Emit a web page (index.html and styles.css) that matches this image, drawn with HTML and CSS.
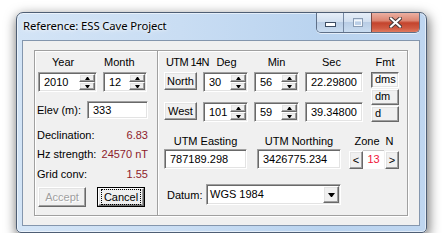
FILE: index.html
```html
<!DOCTYPE html>
<html>
<head>
<meta charset="utf-8">
<link rel="stylesheet" href="styles.css">
</head>
<body>
<div class="window">
  <div class="titlebar">
    <span class="title">Reference: ESS Cave Project</span>
    <div class="caps">
      <span class="cap cap-min"><svg width="11" height="5" viewBox="0 0 11 5"><rect x="0.5" y="0.5" width="10" height="4" fill="#fff" stroke="#3d4d63"/></svg></span>
      <span class="cap cap-max"><svg width="10" height="9" viewBox="0 0 10 9"><rect x="0.5" y="0.5" width="9" height="8" fill="none" stroke="#8a9cb3"/><rect x="1.5" y="2.5" width="7" height="5" fill="none" stroke="#f4f8fc"/></svg></span>
      <span class="cap cap-close"><svg width="13" height="11" viewBox="0 0 13 11"><path d="M2 1.5 L11 9.5 M11 1.5 L2 9.5" stroke="#4a3a3a" stroke-width="4" stroke-linecap="square"/><path d="M2 1.5 L11 9.5 M11 1.5 L2 9.5" stroke="#fff" stroke-width="2" stroke-linecap="square"/></svg></span>
    </div>
  </div>
  <div class="client">
    <div class="group">
      <div class="left">
        <div class="ym-head"><span class="lbl-year">Year</span><span class="lbl-month">Month</span></div>
        <div class="ym-row">
          <div class="spin sunken w-year"><span class="val">2010</span><span class="spin-btns"><span class="sb raised"><i class="up"></i></span><span class="sb raised"><i class="dn"></i></span></span></div>
          <div class="spin sunken w-month"><span class="val">12</span><span class="spin-btns"><span class="sb raised"><i class="up"></i></span><span class="sb raised"><i class="dn"></i></span></span></div>
        </div>
        <div class="elev-row"><span>Elev (m):</span><span class="edit sunken elev">333</span></div>
        <div class="info-row decl"><span>Declination:</span><span class="value">6.83</span></div>
        <div class="info-row hz"><span>Hz strength:</span><span class="value">24570 nT</span></div>
        <div class="info-row grid"><span>Grid conv:</span><span class="value">1.55</span></div>
        <div class="btn-row">
          <span class="btn raised accept">Accept</span>
          <span class="btn-default"><span class="btn raised cancel"><span class="focus">Cancel</span></span></span>
        </div>
      </div>
      <div class="right">
        <div class="top-area">
          <div class="coords">
            <div class="c-head"><span class="h-utm">UTM 14N</span><span class="h-deg">Deg</span><span class="h-min">Min</span><span class="h-sec">Sec</span></div>
            <div class="c-row r1">
              <span class="btn raised hemi">North</span>
              <div class="spin sunken w-deg"><span class="val">30</span><span class="spin-btns"><span class="sb raised"><i class="up"></i></span><span class="sb raised"><i class="dn"></i></span></span></div>
              <div class="spin sunken w-min"><span class="val">56</span><span class="spin-btns"><span class="sb raised"><i class="up"></i></span><span class="sb raised"><i class="dn"></i></span></span></div>
              <span class="edit sunken w-sec">22.29800</span>
            </div>
            <div class="c-row r2">
              <span class="btn raised hemi">West</span>
              <div class="spin sunken w-deg"><span class="val">101</span><span class="spin-btns"><span class="sb raised"><i class="up"></i></span><span class="sb raised"><i class="dn"></i></span></span></div>
              <div class="spin sunken w-min"><span class="val">59</span><span class="spin-btns"><span class="sb raised"><i class="up"></i></span><span class="sb raised"><i class="dn"></i></span></span></div>
              <span class="edit sunken w-sec">39.34800</span>
            </div>
          </div>
          <div class="fmt">
            <span class="fmt-head">Fmt</span>
            <span class="fbtn pressed">dms</span>
            <span class="fbtn raised">dm</span>
            <span class="fbtn raised">d</span>
          </div>
        </div>
        <div class="utm-head">
          <span class="h-east">UTM Easting</span>
          <span class="h-north">UTM Northing</span>
          <span class="h-zone">Zone<span class="zone-n">N</span></span>
        </div>
        <div class="utm-row">
          <span class="edit sunken w-east">787189.298</span>
          <span class="edit sunken w-north">3426775.234</span>
          <div class="zone">
            <span class="btn raised zbtn">&lt;</span>
            <span class="zone-val">13</span>
            <span class="btn raised zbtn zright">&gt;</span>
          </div>
        </div>
        <div class="datum-row">
          <span class="datum-lbl">Datum:</span>
          <div class="combo sunken"><span class="combo-val">WGS 1984</span><span class="drop raised"><i class="dd"></i></span></div>
        </div>
      </div>
    </div>
  </div>
</div>
</body>
</html>
```

FILE: styles.css
```css
* { box-sizing: border-box; }

body {
  margin: 0;
  background: #fff;
  font-family: "Liberation Sans", Arial, sans-serif;
  font-size: 11px;
  color: #000;
}

.window {
  margin: 12px 0 0 16px;
  width: 411px;
  height: 221px;
  border: 1px solid #4e5e74;
  border-radius: 7px 7px 5px 5px;
  background: linear-gradient(90deg, #d3e4f6 0%, #c9ddf3 40%, #b9d3ef 75%, #bfd6f0 100%);
  box-shadow: inset 0 0 0 1px rgba(255,255,255,0.55), 1px 4px 12px 1px rgba(0,0,0,0.55);
  display: flex;
  flex-direction: column;
}

.titlebar {
  height: 27px;
  flex: none;
  display: flex;
  padding-left: 6px;
}

.title {
  align-self: center;
  font-family: "Noto Sans", "Open Sans", sans-serif;
  font-size: 11.3px;
  letter-spacing: -0.1px;
  line-height: 16px;
  margin-top: -1px;
  color: #000;
  text-shadow: 0 0 6px rgba(255,255,255,0.9), 0 0 3px rgba(255,255,255,0.9);
}

.caps {
  margin-left: auto;
  margin-right: 6px;
  height: 20px;
  display: flex;
  border: 1px solid #5f7088;
  border-top: none;
  border-radius: 0 0 5px 5px;
  overflow: hidden;
  box-shadow: 0 1px 0 rgba(255,255,255,0.6);
}

.cap {
  display: flex;
  align-items: center;
  justify-content: center;
  height: 100%;
}

.cap-min {
  width: 27px;
  background: linear-gradient(#e6eef8 0%, #d2e0f0 45%, #b9cde5 50%, #c9dcf0 100%);
  border-right: 1px solid #7588a2;
  align-items: flex-end;
  padding-bottom: 5px;
}

.cap-max {
  width: 28px;
  background: linear-gradient(#e6eef8 0%, #d2e0f0 45%, #b9cde5 50%, #c9dcf0 100%);
  border-right: 1px solid #7a4a44;
}

.cap-close {
  width: 47px;
  background: linear-gradient(#ebb0a2 0%, #dc8672 40%, #c4442d 52%, #cf5a42 80%, #e07a5f 100%);
}

.client {
  margin: 0 6px 0 5px;
  height: 186px;
  flex: none;
  border: 1px solid #8496ad;
  background: #f0f0f0;
  padding: 9px 0 0 11px;
}

.group {
  width: 374px;
  height: 166px;
  border: 1px solid #a0a0a0;
  box-shadow: inset 1px 1px 0 #fff, 1px 1px 0 #fff;
  display: flex;
}

/* shared controls */
.sunken {
  border: 1px solid;
  border-color: #a0a0a0 #fff #fff #a0a0a0;
  padding: 1px;
  box-shadow: inset 1px 1px 0 #696969, inset -1px -1px 0 #e3e3e3;
  background: #fff;
}

.raised {
  border: 1px solid;
  border-color: #fff #696969 #696969 #fff;
  box-shadow: inset -1px -1px 0 #a0a0a0, inset 1px 1px 0 #e3e3e3;
  background: #f0f0f0;
}

.spin {
  display: flex;
  height: 20px;
}

.spin .val {
  flex: 1;
  padding-left: 4px;
  line-height: 16px;
}

.spin-btns {
  width: 16px;
  display: flex;
  flex-direction: column;
}

.sb {
  height: 8px;
  display: flex;
  align-items: center;
  justify-content: center;
}

.sb i {
  display: block;
  width: 1px;
  height: 0;
  border-left: 2px solid transparent;
  border-right: 2px solid transparent;
}

.sb i.up { border-bottom: 3px solid #000; box-sizing: content-box; }
.sb i.dn { border-top: 3px solid #000; box-sizing: content-box; }

.edit {
  height: 20px;
  padding-left: 5px;
  line-height: 16px;
  white-space: nowrap;
}

.btn {
  display: flex;
  align-items: center;
  justify-content: center;
  line-height: 13px;
}

/* left section */
.left {
  width: 122px;
  flex: none;
  padding: 5px 9px 0 2px;
  display: flex;
  flex-direction: column;
}

.ym-head {
  display: grid;
  grid-template-columns: 59px 44px;
  column-gap: 6px;
  margin-left: 1px;
  height: 13px;
  line-height: 13px;
}

.lbl-year { padding-left: 14px; }
.lbl-month { padding-left: 1px; }

.ym-row {
  display: flex;
  gap: 6px;
  margin: 3px 0 0 1px;
}

.w-year { width: 59px; }
.w-month { width: 44px; }

.elev-row {
  display: flex;
  align-items: center;
  justify-content: space-between;
  margin-top: 9px;
  height: 18px;
}

.elev {
  width: 61px;
  height: 18px;
  line-height: 14px;
}

.info-row {
  display: flex;
  justify-content: space-between;
  height: 13px;
  line-height: 13px;
}

.value { color: #8e1b2b; }

.decl { margin-top: 10px; }
.hz { margin-top: 6px; }
.grid { margin-top: 7px; }

.btn-row {
  display: flex;
  gap: 11px;
  margin: 6px 0 0 1px;
}

.accept {
  width: 48px;
  height: 20px;
  color: #a0a0a0;
  text-shadow: 1px 1px 0 #fff;
}

.btn-default {
  width: 48px;
  height: 20px;
  border: 1px solid #000;
  display: flex;
}

.cancel {
  flex: 1;
}

.focus {
  border: 1px dotted #000;
  padding: 1px 2px;
  line-height: 12px;
}

/* right section */
.right {
  width: 250px;
  flex: none;
  border-left: 1px solid #a0a0a0;
  box-shadow: inset 1px 0 0 #fff;
  padding: 5px 0 0 6px;
  display: flex;
  flex-direction: column;
}

.top-area { display: flex; }

.coords {
  display: flex;
  flex-direction: column;
}

.c-head {
  display: flex;
  gap: 6px;
  height: 13px;
  line-height: 13px;
  white-space: nowrap;
}

.h-utm { width: 33px; padding-left: 2px; letter-spacing: -0.6px; }
.h-deg { width: 45px; text-align: center; padding-left: 2px; }
.h-min { width: 45px; text-align: center; }
.h-sec { width: 58px; text-align: center; padding-right: 5px; }

.c-row {
  display: flex;
  gap: 6px;
  height: 20px;
  margin-top: 3px;
}

.c-row.r2 { margin-top: 10px; }

.hemi {
  width: 33px;
  height: 18px;
}

.w-deg { width: 45px; }
.w-min { width: 45px; }
.w-sec { width: 58px; }

.fmt {
  margin-left: 8px;
  width: 28px;
  display: flex;
  flex-direction: column;
  gap: 1px;
}

.fmt-head {
  height: 13px;
  line-height: 13px;
  text-align: center;
  margin-bottom: 2px;
}

.fbtn {
  height: 16px;
  line-height: 13px;
  padding-left: 3px;
}

.pressed {
  border: 1px solid;
  border-color: #696969 #fff #fff #696969;
  box-shadow: inset 1px 1px 0 #a0a0a0, inset -1px -1px 0 #e3e3e3;
  background: #f8f8f8;
}

.utm-head {
  display: flex;
  margin-top: 13px;
  height: 13px;
  line-height: 13px;
  white-space: nowrap;
}

.h-east { width: 83px; margin-right: 10px; text-align: center; }
.h-north { width: 84px; margin-right: 8px; text-align: center; }
.h-zone { width: 50px; text-align: center; }
.zone-n { margin-left: 6px; }

.utm-row {
  display: flex;
  margin-top: 1px;
  height: 20px;
}

.w-east { width: 83px; margin-right: 10px; }
.w-north { width: 84px; margin-right: 8px; }

.zone {
  display: flex;
  align-items: flex-end;
}

.zbtn {
  width: 14px;
  height: 18px;
}

.zright { margin-left: 1px; }

.zone-val {
  width: 21px;
  height: 19px;
  background: #fff;
  border-top: 1px solid #c8c8c8;
  color: #f0143c;
  text-align: center;
  line-height: 17px;
}

.datum-row {
  display: flex;
  align-items: center;
  margin-top: 15px;
}

.datum-lbl {
  width: 39px;
  margin-left: 3px;
  line-height: 13px;
  margin-top: 2px;
}

.combo {
  width: 135px;
  height: 21px;
  display: flex;
}

.combo-val {
  flex: 1;
  padding-left: 2px;
  line-height: 17px;
}

.drop {
  width: 16px;
  display: flex;
  align-items: center;
  justify-content: center;
}

.drop i {
  display: block;
  width: 1px;
  height: 0;
  box-sizing: content-box;
  border-left: 3px solid transparent;
  border-right: 3px solid transparent;
  border-top: 4px solid #000;
}
```
